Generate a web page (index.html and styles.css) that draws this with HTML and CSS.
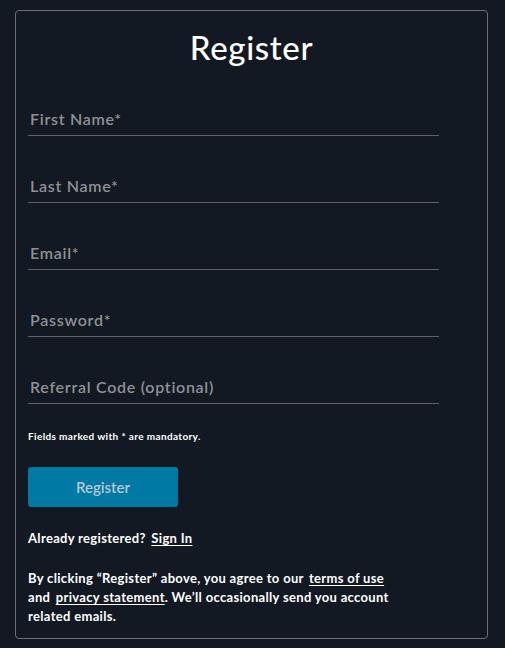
FILE: index.html
```html
<!DOCTYPE html>
<html lang="en">
<head>
<meta charset="utf-8">
<title>Register</title>
<link rel="stylesheet" href="styles.css">
</head>
<body>
<div class="card">
  <h1 class="title">Register</h1>
  <form class="form">
    <div class="field"><input type="text" placeholder="First Name*"></div>
    <div class="field"><input type="text" placeholder="Last Name*"></div>
    <div class="field"><input type="email" placeholder="Email*"></div>
    <div class="field"><input type="password" placeholder="Password*"></div>
    <div class="field"><input type="text" placeholder="Referral Code (optional)"></div>
    <p class="note">Fields marked with * are mandatory.</p>
    <button type="button" class="btn">Register</button>
  </form>
  <p class="signin">Already registered? <a class="link" href="#">Sign In</a></p>
  <p class="legal">By clicking “Register” above, you agree to our <a class="link" href="#">terms of use</a> and <a class="link" href="#">privacy statement</a>. We’ll occasionally send you account related emails.</p>
</div>
</body>
</html>
```

FILE: styles.css
```css
html, body {
  margin: 0;
  padding: 0;
  background: #121923;
}
body {
  font-family: Lato, "Noto Sans", sans-serif;
  color: #ffffff;
  padding: 10px 17px 13px 15px;
}
.card {
  border: 1px solid #6b6e75;
  border-radius: 4px;
  padding: 0 12px 12px 12px;
}
.title {
  margin: 0;
  padding-top: 16px;
  text-align: center;
  font-size: 33px;
  font-weight: 500;
  line-height: 40px;
  letter-spacing: 0.02em;
  color: #ffffff;
}
.form {
  width: 411px;
  display: flex;
  flex-direction: column;
}
.field {
  margin-top: 33px;
}
.field:first-child {
  margin-top: 35px;
}
.field input {
  display: block;
  width: 100%;
  box-sizing: border-box;
  background: transparent;
  border: 0;
  border-bottom: 1px solid #5e6168;
  padding: 5px 2px 6px 2px;
  height: 34px;
  font-family: inherit;
  font-size: 16px;
  letter-spacing: 0.045em;
  color: #ffffff;
  outline: none;
}
.field input::placeholder {
  color: #8f9195;
  font-weight: 600;
}
.note {
  margin: 25px 0 0 0;
  font-size: 10px;
  font-weight: 700;
  line-height: 14px;
  letter-spacing: 0.037em;
}
.btn {
  margin-top: 24px;
  width: 150px;
  height: 40px;
  border: 0;
  border-radius: 3px;
  background: #0079a4;
  color: #b8c8d2;
  font-family: inherit;
  font-size: 15px;
  font-weight: 600;
}
.signin {
  margin: 22px 0 0 0;
  font-size: 13px;
  font-weight: 700;
  line-height: 18px;
  letter-spacing: 0.025em;
}
.link {
  color: #ffffff;
  text-decoration: underline;
  text-underline-offset: 2px;
  margin-left: 2px;
}
.legal {
  margin: 22px 0 0 0;
  width: 374px;
  font-size: 13px;
  font-weight: 700;
  line-height: 19px;
  letter-spacing: 0.025em;
}
```
